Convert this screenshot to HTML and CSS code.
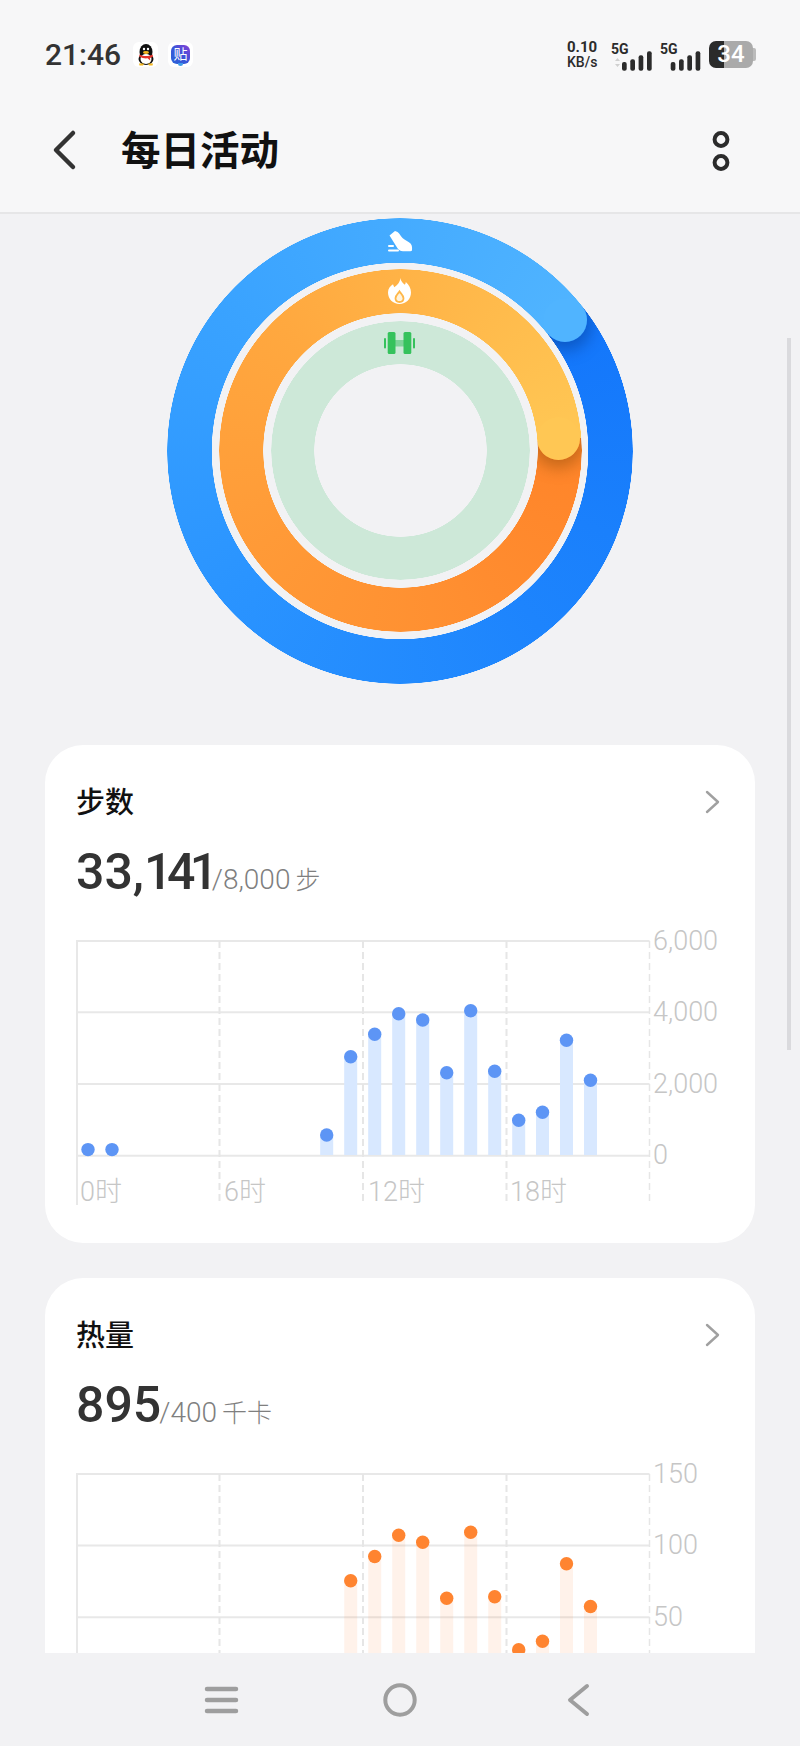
FILE: index.html
```html
<!DOCTYPE html>
<html>
<head>
    <title>每日活动</title>
    <meta charset="UTF-8">
    <meta name="viewport" content="width=device-width, initial-scale=1.0">
    <link rel="stylesheet" href="styles.css">
</head>
<body>
    <header class="header">
        <div class="status-bar">
            <span class="time">21:46</span>
            <span class="app-icon">
                <svg width="20" height="22" viewBox="0 0 20 22">
                    <ellipse cx="10" cy="8" rx="6.5" ry="8" fill="#111"/>
                    <ellipse cx="10" cy="15" rx="7.5" ry="6" fill="#111"/>
                    <ellipse cx="10" cy="15" rx="5.5" ry="5" fill="#fff"/>
                    <ellipse cx="10" cy="8.5" rx="3" ry="1.4" fill="#f5b81f"/>
                    <circle cx="8" cy="5" r="1.2" fill="#fff"/>
                    <circle cx="12" cy="5" r="1.2" fill="#fff"/>
                    <path d="M3.5 10.5c4 2 9 2 13 0l.5 2c-1 .8-2 1.2-3 1.4l.2 2.6-2.6-2.2c-2.5.3-5.5-.1-8.4-1.8z" fill="#e5332a"/>
                    <path d="M3 19.5h5l-1 2H3.5zM12 19.5h5l-.5 2H13z" fill="#f5b81f"/>
                </svg>
            </span>
            <span class="app-icon">
                <span class="tie">贴</span>
            </span>
            <span class="status-right">
                <span class="net-speed"><b>0.10</b><i>KB/s</i></span>
                <svg class="signal" width="42" height="32" viewBox="0 -4 42 32">
                    <text x="0" y="11">5G</text>
                    <path d="M4 18l2.5-3 2.5 3zM4 21l2.5 3 2.5-3z" fill="#d0d0d0"/>
                    <rect x="11" y="19" width="4.7" height="8.7" rx="2"/>
                    <rect x="19.3" y="16.3" width="4.7" height="11.4" rx="2"/>
                    <rect x="27.6" y="12.3" width="4.7" height="15.4" rx="2"/>
                    <rect x="36" y="8.3" width="4.7" height="19.4" rx="2"/>
                </svg>
                <svg class="signal" width="42" height="32" viewBox="0 -4 42 32">
                    <text x="0" y="11">5G</text>
                    <rect x="10.7" y="19" width="4.7" height="8.7" rx="2"/>
                    <rect x="19" y="16.3" width="4.7" height="11.4" rx="2"/>
                    <rect x="27.3" y="12.3" width="4.7" height="15.4" rx="2"/>
                    <rect x="35.6" y="8.3" width="4.7" height="19.4" rx="2"/>
                </svg>
                <span class="battery">34</span>
            </span>
        </div>
        <div class="toolbar">
            <svg class="back" width="30" height="44" viewBox="0 0 30 44">
                <path d="M24 5L7 22l17 17" fill="none" stroke="#333" stroke-width="4.5" stroke-linecap="round" stroke-linejoin="round"/>
            </svg>
            <h1 class="page-title">每日活动</h1>
            <svg class="more" width="20" height="42" viewBox="0 0 20 42">
                <circle cx="10" cy="9.5" r="6.4" fill="none" stroke="#2b2b2b" stroke-width="4"/>
                <circle cx="10" cy="32.5" r="6.4" fill="none" stroke="#2b2b2b" stroke-width="4"/>
            </svg>
        </div>
    </header>

    <main class="content">
        <div class="rings">
            <div class="ring ring-blue">
                <div class="ring-shadow ring-shadow-blue"></div>
                <div class="ring-arc ring-arc-blue"></div>
                <div class="ring-cap ring-cap-blue"></div>
            </div>
            <div class="ring ring-orange">
                <div class="ring-shadow ring-shadow-orange"></div>
                <div class="ring-arc ring-arc-orange"></div>
                <div class="ring-cap ring-cap-orange"></div>
            </div>
            <div class="ring ring-green"></div>

            <svg class="ring-icon icon-shoe" width="25" height="23" viewBox="0 0 25 23" fill="#fff">
                <path d="M1.5 5.5L7 1c1.8.3 3.5 1.5 4.500 3 1 1.700 2.500 4 5 5.500 2.500 1.500 6 3 7 5.500.6 1.500.7 3.500.5 5-.1.800-.6 1.200-1.500 1.200H15c-2.500 0-4-1.200-5.500-3z"/>
                <rect x="0" y="15" width="6" height="2" rx="1"/>
                <rect x="0" y="19.5" width="11" height="2" rx="1"/>
            </svg>
            <svg class="ring-icon icon-flame" width="23" height="26" viewBox="0 0 23 26">
                <path d="M12.5 0c.2 3.5 2.500 5 4.300 6.800.6-.8 1-1.700 1-2.800C21 6.800 23 10.300 23 14.500 23 21 18 26 11.500 26S0 21 0 14.500C0 10.800 2.300 8 5 6.300c.5 1 .6 2 1.300 2.900C8.800 7.500 12 4.500 12.500 0z" fill="#fff"/>
                <path d="M11.5 13.5c1.300 2.300 4 3.800 4 6.800 0 2.300-1.800 3.700-4 3.700s-4-1.400-4-3.700c0-3 2.700-4.500 4-6.800z" fill="#fff3dc" stroke="#ffb84a" stroke-width="1.8"/>
            </svg>
            <svg class="ring-icon icon-bell" width="31" height="22" viewBox="0 0 31 22">
                <rect x="11" y="8" width="9" height="6.5" fill="#7fd39a"/>
                <rect x="0" y="6" width="2" height="10.5" rx="1" fill="#35c25c"/>
                <rect x="29" y="6" width="2" height="10.5" rx="1" fill="#35c25c"/>
                <rect x="3.7" y="0" width="7.8" height="22" rx="1.5" fill="#35c25c"/>
                <rect x="19.5" y="0" width="7.8" height="22" rx="1.5" fill="#35c25c"/>
            </svg>
        </div>

        <section class="card">
            <div class="card-head">
                <h2 class="card-title">步数</h2>
                <svg class="chevron" width="15" height="24" viewBox="0 0 15 24">
                    <path d="M2 2l11 10L2 22" fill="none" stroke="#a0a0a0" stroke-width="2.4" stroke-linecap="round" stroke-linejoin="round"/>
                </svg>
            </div>
            <div class="value"><span class="value-num">33,<span class="tight">141</span></span><span class="value-goal">/8,000</span><span class="value-unit">步</span></div>
            <svg class="chart" width="644" height="285" viewBox="0 0 644 285">
                <g class="grid">
                    <line x1="0" y1="16" x2="573.5" y2="16"/>
                    <line x1="0" y1="87.3" x2="573.5" y2="87.3"/>
                    <line x1="0" y1="159" x2="573.5" y2="159"/>
                    <line x1="0" y1="230.7" x2="573.5" y2="230.7"/>
                    <line x1="1" y1="16" x2="1" y2="280"/>
                </g>
                <g class="grid-dash">
                    <line x1="143.5" y1="16" x2="143.5" y2="280"/>
                    <line x1="287" y1="16" x2="287" y2="280"/>
                    <line x1="430.5" y1="16" x2="430.5" y2="280"/>
                    <line class="grid-end" x1="573.5" y1="16" x2="573.5" y2="280"/>
                </g>
                <g class="bars bars-blue">
                    <line x1="250.7" y1="210" x2="250.7" y2="230"/>
                    <line x1="274.7" y1="131.7" x2="274.7" y2="230"/>
                    <line x1="298.7" y1="109.3" x2="298.7" y2="230"/>
                    <line x1="322.7" y1="88.7" x2="322.7" y2="230"/>
                    <line x1="346.7" y1="95" x2="346.7" y2="230"/>
                    <line x1="370.7" y1="147.7" x2="370.7" y2="230"/>
                    <line x1="394.7" y1="85.7" x2="394.7" y2="230"/>
                    <line x1="418.7" y1="146.3" x2="418.7" y2="230"/>
                    <line x1="442.7" y1="195.3" x2="442.7" y2="230"/>
                    <line x1="466.5" y1="187.3" x2="466.5" y2="230"/>
                    <line x1="490.5" y1="115.3" x2="490.5" y2="230"/>
                    <line x1="514.5" y1="155.3" x2="514.5" y2="230"/>
                </g>
                <g class="dots dots-blue">
                    <circle cx="12" cy="224.6" r="6.7"/>
                    <circle cx="36" cy="224.6" r="6.7"/>
                    <circle cx="250.7" cy="210" r="6.7"/>
                    <circle cx="274.7" cy="131.7" r="6.7"/>
                    <circle cx="298.7" cy="109.3" r="6.7"/>
                    <circle cx="322.7" cy="88.7" r="6.7"/>
                    <circle cx="346.7" cy="95" r="6.7"/>
                    <circle cx="370.7" cy="147.7" r="6.7"/>
                    <circle cx="394.7" cy="85.7" r="6.7"/>
                    <circle cx="418.7" cy="146.3" r="6.7"/>
                    <circle cx="442.7" cy="195.3" r="6.7"/>
                    <circle cx="466.5" cy="187.3" r="6.7"/>
                    <circle cx="490.5" cy="115.3" r="6.7"/>
                    <circle cx="514.5" cy="155.3" r="6.7"/>
                </g>
                <g class="axis">
                    <text x="577" y="25">6,000</text>
                    <text x="577" y="96">4,000</text>
                    <text x="577" y="168">2,000</text>
                    <text x="577" y="239">0</text>
                    <text x="4" y="276">0时</text>
                    <text x="148" y="276">6时</text>
                    <text x="292" y="276">12时</text>
                    <text x="434" y="276">18时</text>
                </g>
            </svg>
        </section>

        <section class="card">
            <div class="card-head">
                <h2 class="card-title">热量</h2>
                <svg class="chevron" width="15" height="24" viewBox="0 0 15 24">
                    <path d="M2 2l11 10L2 22" fill="none" stroke="#a0a0a0" stroke-width="2.4" stroke-linecap="round" stroke-linejoin="round"/>
                </svg>
            </div>
            <div class="value"><span class="value-num">895</span><span class="value-goal">/400</span><span class="value-unit">千卡</span></div>
            <svg class="chart" width="644" height="285" viewBox="0 0 644 285">
                <g class="grid">
                    <line x1="0" y1="16" x2="573.5" y2="16"/>
                    <line x1="0" y1="87.5" x2="573.5" y2="87.5"/>
                    <line x1="0" y1="159.2" x2="573.5" y2="159.2"/>
                    <line x1="1" y1="16" x2="1" y2="280"/>
                </g>
                <g class="grid-dash">
                    <line x1="143.5" y1="16" x2="143.5" y2="280"/>
                    <line x1="287" y1="16" x2="287" y2="280"/>
                    <line x1="430.5" y1="16" x2="430.5" y2="280"/>
                    <line class="grid-end" x1="573.5" y1="16" x2="573.5" y2="280"/>
                </g>
                <g class="bars bars-orange">
                    <line x1="274.7" y1="122.8" x2="274.7" y2="230"/>
                    <line x1="298.7" y1="98.5" x2="298.7" y2="230"/>
                    <line x1="322.7" y1="77.2" x2="322.7" y2="230"/>
                    <line x1="346.7" y1="84.2" x2="346.7" y2="230"/>
                    <line x1="370.7" y1="140.2" x2="370.7" y2="230"/>
                    <line x1="394.7" y1="74.2" x2="394.7" y2="230"/>
                    <line x1="418.7" y1="138.8" x2="418.7" y2="230"/>
                    <line x1="442.7" y1="191.8" x2="442.7" y2="230"/>
                    <line x1="466.5" y1="183.2" x2="466.5" y2="230"/>
                    <line x1="490.5" y1="105.8" x2="490.5" y2="230"/>
                    <line x1="514.5" y1="148.5" x2="514.5" y2="230"/>
                </g>
                <g class="dots dots-orange">
                    <circle cx="274.7" cy="122.8" r="6.7"/>
                    <circle cx="298.7" cy="98.5" r="6.7"/>
                    <circle cx="322.7" cy="77.2" r="6.7"/>
                    <circle cx="346.7" cy="84.2" r="6.7"/>
                    <circle cx="370.7" cy="140.2" r="6.7"/>
                    <circle cx="394.7" cy="74.2" r="6.7"/>
                    <circle cx="418.7" cy="138.8" r="6.7"/>
                    <circle cx="442.7" cy="191.8" r="6.7"/>
                    <circle cx="466.5" cy="183.2" r="6.7"/>
                    <circle cx="490.5" cy="105.8" r="6.7"/>
                    <circle cx="514.5" cy="148.5" r="6.7"/>
                </g>
                <g class="axis">
                    <text x="577" y="25">150</text>
                    <text x="577" y="96">100</text>
                    <text x="577" y="168">50</text>
                </g>
            </svg>
        </section>
        <div class="scrollbar"></div>
    </main>

    <nav class="nav-bar">
        <svg width="36" height="28" viewBox="0 0 36 28">
            <path d="M3 3h29M3 14h29M3 25h29" fill="none" stroke="#9e9e9e" stroke-width="4.5" stroke-linecap="round"/>
        </svg>
        <svg width="36" height="36" viewBox="0 0 36 36">
            <circle cx="18" cy="18" r="14.7" fill="none" stroke="#9e9e9e" stroke-width="4"/>
        </svg>
        <svg width="26" height="36" viewBox="0 0 26 36">
            <path d="M22 4L5 18l17 14" fill="none" stroke="#9e9e9e" stroke-width="4" stroke-linecap="round" stroke-linejoin="round"/>
        </svg>
    </nav>
</body>
</html>
```

FILE: styles.css
```css
* {
    box-sizing: border-box;
}
body {
    margin: 0;
    width: 800px;
    height: 1746px;
    overflow: hidden;
    display: flex;
    flex-direction: column;
    background-color: #f2f2f4;
    font-family: Roboto, "Noto Sans CJK SC", sans-serif;
    color: #333;
}
.header {
    height: 214px;
    flex-shrink: 0;
    background-color: #f7f7f8;
    border-bottom: 2px solid #e6e6e7;
}
.status-bar {
    height: 83px;
    padding: 26px 44px 0 45px;
    display: flex;
    align-items: center;
}
.time {
    font-size: 30px;
    font-weight: 500;
    color: #333;
    width: 88px;
}
.app-icon {
    width: 25px;
    height: 25px;
    margin-right: 10px;
    background-color: #fff;
    border-radius: 6px;
    display: flex;
    align-items: center;
    justify-content: center;
}
.tie {
    position: relative;
    width: 19px;
    height: 19px;
    border-radius: 6px;
    background: linear-gradient(45deg, #2a63d8, #3a55d8 50%, #8a3fd6);
    color: #fff;
    font-size: 14px;
    line-height: 19px;
    text-align: center;
}
.tie::after {
    content: "";
    position: absolute;
    left: 7px;
    top: 18px;
    width: 5px;
    height: 3px;
    border-radius: 0 0 3px 3px;
    background-color: #3f9be8;
}
.status-right {
    margin-left: auto;
    display: flex;
    align-items: center;
}
.net-speed {
    display: flex;
    flex-direction: column;
    width: 44px;
    color: #2b2b2b;
    line-height: 15px;
}
.net-speed b {
    height: 15px;
    font-size: 15px;
    font-weight: 700;
}
.net-speed i {
    height: 15px;
    font-size: 14px;
    font-weight: 500;
    font-style: normal;
}
.signal {
    margin-right: 7px;
    fill: #2b2b2b;
}
.signal text {
    font-size: 14px;
    font-weight: 700;
}
.battery {
    position: relative;
    width: 44px;
    height: 27px;
    margin-right: 3px;
    border-radius: 7px;
    background: linear-gradient(90deg, #2b2b2b 15px, #aaa 15px);
    color: #fff;
    font-size: 24px;
    font-weight: 500;
    line-height: 27px;
    text-align: center;
}
.battery::after {
    content: "";
    position: absolute;
    left: 44px;
    top: 7px;
    width: 3px;
    height: 13px;
    border-radius: 0 2px 2px 0;
    background-color: #bbb;
}
.toolbar {
    height: 129px;
    padding: 0 69px 0 49px;
    display: flex;
    align-items: center;
}
.back {
    margin-top: 5px;
}
.page-title {
    margin: 0 0 0 42px;
    font-size: 39.5px;
    font-weight: 700;
    color: #111;
    font-family: "Noto Sans CJK SC", sans-serif;
}
.more {
    margin-left: auto;
    margin-top: 6px;
}
.content {
    position: relative;
    flex: 1;
    min-height: 0;
    overflow: hidden;
}
.rings {
    position: relative;
    width: 466px;
    height: 466px;
    margin: 3.5px auto 61.5px;
    display: grid;
    place-items: center;
}
.ring {
    position: relative;
    grid-area: 1 / 1;
    border-radius: 50%;
    -webkit-mask: radial-gradient(closest-side, transparent calc(100% - var(--w) - .5px), #000 calc(100% - var(--w)), #000 calc(100% - .5px), transparent 100%);
    mask: radial-gradient(closest-side, transparent calc(100% - var(--w) - .5px), #000 calc(100% - var(--w)), #000 calc(100% - .5px), transparent 100%);
}
.ring-blue {
    --w: 44.5px;
    width: 466px;
    height: 466px;
    background: conic-gradient(from 51.5deg, #1376fb, #1a80fc 60deg, #1d84fd 90deg, #2a94ff 180deg, #3aa3ff 260deg, #50b4ff 360deg);
}
.ring-orange {
    --w: 44px;
    width: 363px;
    height: 363px;
    background: conic-gradient(from 86deg, #ff8429, #ff8c2f 60deg, #ff8e30 70deg, #ff9a37 150deg, #ffa83f 230deg, #ffc754 360deg);
}
.ring-green {
    --w: 43px;
    width: 259px;
    height: 259px;
    background-color: #cde8d8;
}
.ring-arc {
    position: absolute;
    inset: 0;
}
.ring-arc-blue {
    background: conic-gradient(from 51.5deg, transparent 0 60deg, #1a80fc 60deg, #1d84fd 90deg, #2a94ff 180deg, #3aa3ff 260deg, #50b4ff 360deg);
}
.ring-arc-orange {
    background: conic-gradient(from 86deg, transparent 0 60deg, #ff8c2f 60deg, #ff8e30 70deg, #ff9a37 150deg, #ffa83f 230deg, #ffc754 360deg);
}
.ring-cap,
.ring-shadow {
    position: absolute;
    border-radius: 50%;
}
.ring-cap-blue,
.ring-shadow-blue {
    left: 376px;
    top: 80px;
    width: 44px;
    height: 44px;
}
.ring-cap-blue {
    background-color: #50b4ff;
}
.ring-shadow-blue {
    box-shadow: 0 4px 16px 4px rgba(0, 40, 110, .4);
}
.ring-cap-orange,
.ring-shadow-orange {
    left: 318.5px;
    top: 148px;
    width: 43px;
    height: 43px;
}
.ring-cap-orange {
    background-color: #ffc754;
}
.ring-shadow-orange {
    box-shadow: 0 4px 16px 4px rgba(110, 60, 0, .4);
}
.ring-icon {
    position: absolute;
    left: 50%;
}
.icon-shoe {
    top: 12px;
    margin-left: -12px;
}
.icon-flame {
    top: 60px;
    margin-left: -12px;
}
.icon-bell {
    top: 114px;
    margin-left: -16px;
}
.card {
    height: 498px;
    margin: 0 45px 35px;
    padding: 35px 35px 0 31px;
    background-color: #fff;
    border-radius: 38px;
}
.card-head {
    height: 40px;
    display: flex;
    align-items: center;
    justify-content: space-between;
}
.card-title {
    margin: 0;
    font-size: 29px;
    font-weight: 500;
    color: #111;
    font-family: "Noto Sans CJK SC", sans-serif;
}
.chevron {
    margin-top: 4px;
}
.value {
    margin-top: 24px;
    height: 56px;
    line-height: 56px;
    white-space: nowrap;
}
.value-num {
    font-size: 50px;
    font-weight: 500;
    color: #333;
}
.tight {
    letter-spacing: -5.5px;
    margin-right: 1px;
}
.value-goal {
    margin-left: -2px;
    font-size: 28px;
    font-weight: 300;
    color: #7f7f7f;
}
.value-unit {
    margin-left: 5px;
    font-size: 25px;
    font-weight: 300;
    color: #7f7f7f;
}
.chart {
    display: block;
    margin-top: 25px;
    overflow: visible;
}
.grid line {
    stroke: #e8e8e8;
    stroke-width: 2;
}
.grid-dash line {
    stroke: #e6e6e6;
    stroke-width: 2;
    stroke-dasharray: 7 4;
}
.grid-dash .grid-end {
    stroke-width: 1.5;
}
.bars line {
    stroke-width: 13;
}
.bars-blue line {
    stroke: #d8e8ff;
}
.bars-orange line {
    stroke: #ff8430;
    stroke-opacity: .1;
}
.dots-blue {
    fill: #5d95f5;
}
.dots-orange {
    fill: #ff8430;
}
.axis text {
    font-size: 27px;
    font-weight: 300;
    fill: #c6c6c6;
}
.scrollbar {
    position: absolute;
    left: 787px;
    top: 124px;
    width: 4px;
    height: 712px;
    background-color: #dadadd;
}
.nav-bar {
    height: 93px;
    flex-shrink: 0;
    background-color: #f2f2f4;
    display: grid;
    grid-template-columns: repeat(3, 178px);
    justify-content: center;
    justify-items: center;
    align-items: center;
}
```
